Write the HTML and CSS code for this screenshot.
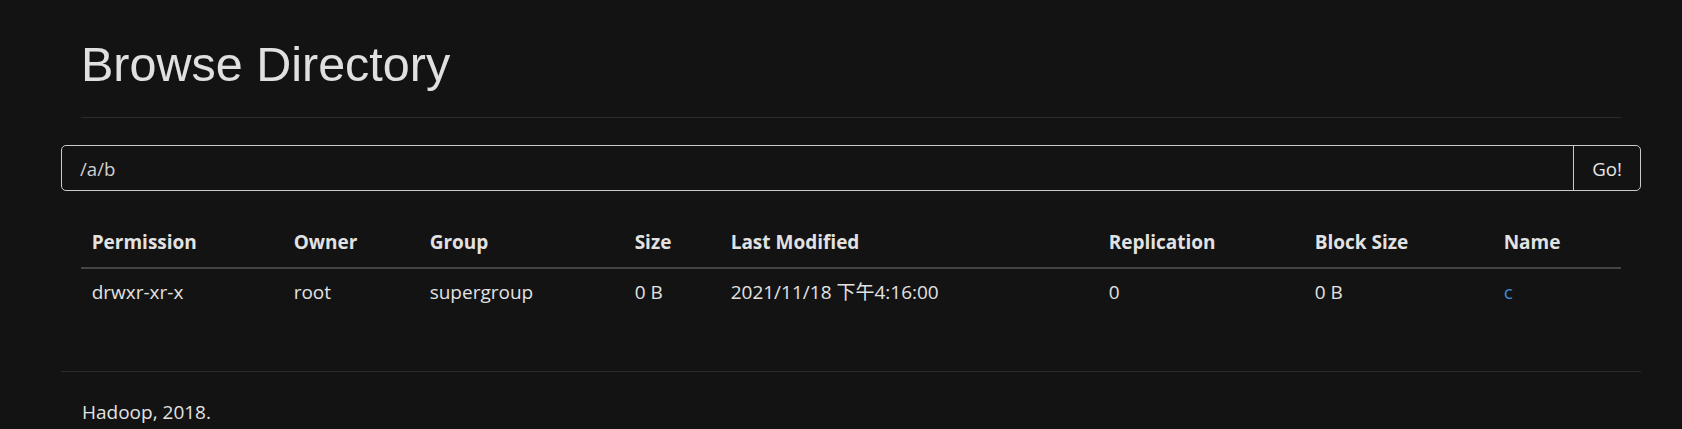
FILE: index.html
```html
<!DOCTYPE html>
<html>
<head>
<meta charset="utf-8">
<title>Browse Directory</title>
<link rel="stylesheet" href="styles.css">
</head>
<body>
<div class="container">
  <div class="page-header">
    <h1>Browse Directory</h1>
  </div>
  <div class="input-group">
    <input class="path-input" type="text" value="/a/b">
    <button class="go-btn">Go!</button>
  </div>
  <div class="table-wrap">
    <table class="listing">
      <colgroup>
        <col class="c-perm"><col class="c-owner"><col class="c-group"><col class="c-size">
        <col class="c-mod"><col class="c-rep"><col class="c-block"><col class="c-name">
      </colgroup>
      <thead>
        <tr>
          <th>Permission</th><th>Owner</th><th>Group</th><th>Size</th>
          <th>Last Modified</th><th>Replication</th><th>Block Size</th><th>Name</th>
        </tr>
      </thead>
      <tbody>
        <tr>
          <td>drwxr-xr-x</td><td>root</td><td>supergroup</td><td>0 B</td>
          <td>2021/11/18 下午4:16:00</td><td>0</td><td>0 B</td><td><a href="#" class="dir-link">c</a></td>
        </tr>
      </tbody>
    </table>
  </div>
  <hr class="footer-rule">
  <div class="footer">Hadoop, 2018.</div>
</div>
</body>
</html>
```
FILE: styles.css
```css
html, body {
  margin: 0;
  padding: 0;
  background: #131313;
  color: #e2e2e2;
  font-family: "Open Sans", "Noto Sans CJK SC", sans-serif;
  font-size: 19px;
}
.container {
  margin: 0 41px 0 61px;
}
.page-header {
  margin: 0 20px 27px 20px;
  padding-top: 38px;
  padding-bottom: 26px;
  border-bottom: 1px solid #2a2a2a;
}
.page-header h1 {
  margin: 0;
  font-family: "Liberation Sans", Arial, sans-serif;
  font-weight: normal;
  font-size: 48.5px;
  line-height: 53px;
  color: #e0e0e0;
}
.input-group {
  display: flex;
  height: 46px;
  border: 1px solid #c9c9c9;
  border-radius: 5px;
  box-sizing: border-box;
}
.path-input {
  flex: 1;
  background: transparent;
  border: 0;
  outline: none;
  color: #d0d0d0;
  font-family: "Open Sans", sans-serif;
  font-size: 18.67px;
  padding: 0 16px 0 18px;
  margin: 0;
}
.go-btn {
  width: 67px;
  background: transparent;
  border: 0;
  border-left: 1px solid #c9c9c9;
  color: #e6e6e6;
  font-family: "Open Sans", sans-serif;
  font-size: 18.67px;
  padding: 0;
  margin: 0;
}
.table-wrap {
  margin: 27px 20px 0 20px;
}
.listing {
  width: 100%;
  border-collapse: collapse;
  table-layout: fixed;
}
.c-perm { width: 202px; }
.c-owner { width: 136px; }
.c-group { width: 205px; }
.c-size { width: 96px; }
.c-mod { width: 378px; }
.c-rep { width: 206px; }
.c-block { width: 189px; }
.c-name { width: auto; }
.listing th, .listing td {
  text-align: left;
  padding: 10.67px;
  line-height: 27.5px;
  white-space: nowrap;
}
.listing th {
  font-weight: bold;
  border-bottom: 2px solid #444444;
}
.dir-link {
  color: #3d8bd6;
  text-decoration: none;
}
.footer-rule {
  margin: 53px 0 0 0;
  border: 0;
  border-top: 1px solid #2a2a2a;
}
.footer {
  padding: 27px 20px 0 21px;
  line-height: 26.67px;
}
```
